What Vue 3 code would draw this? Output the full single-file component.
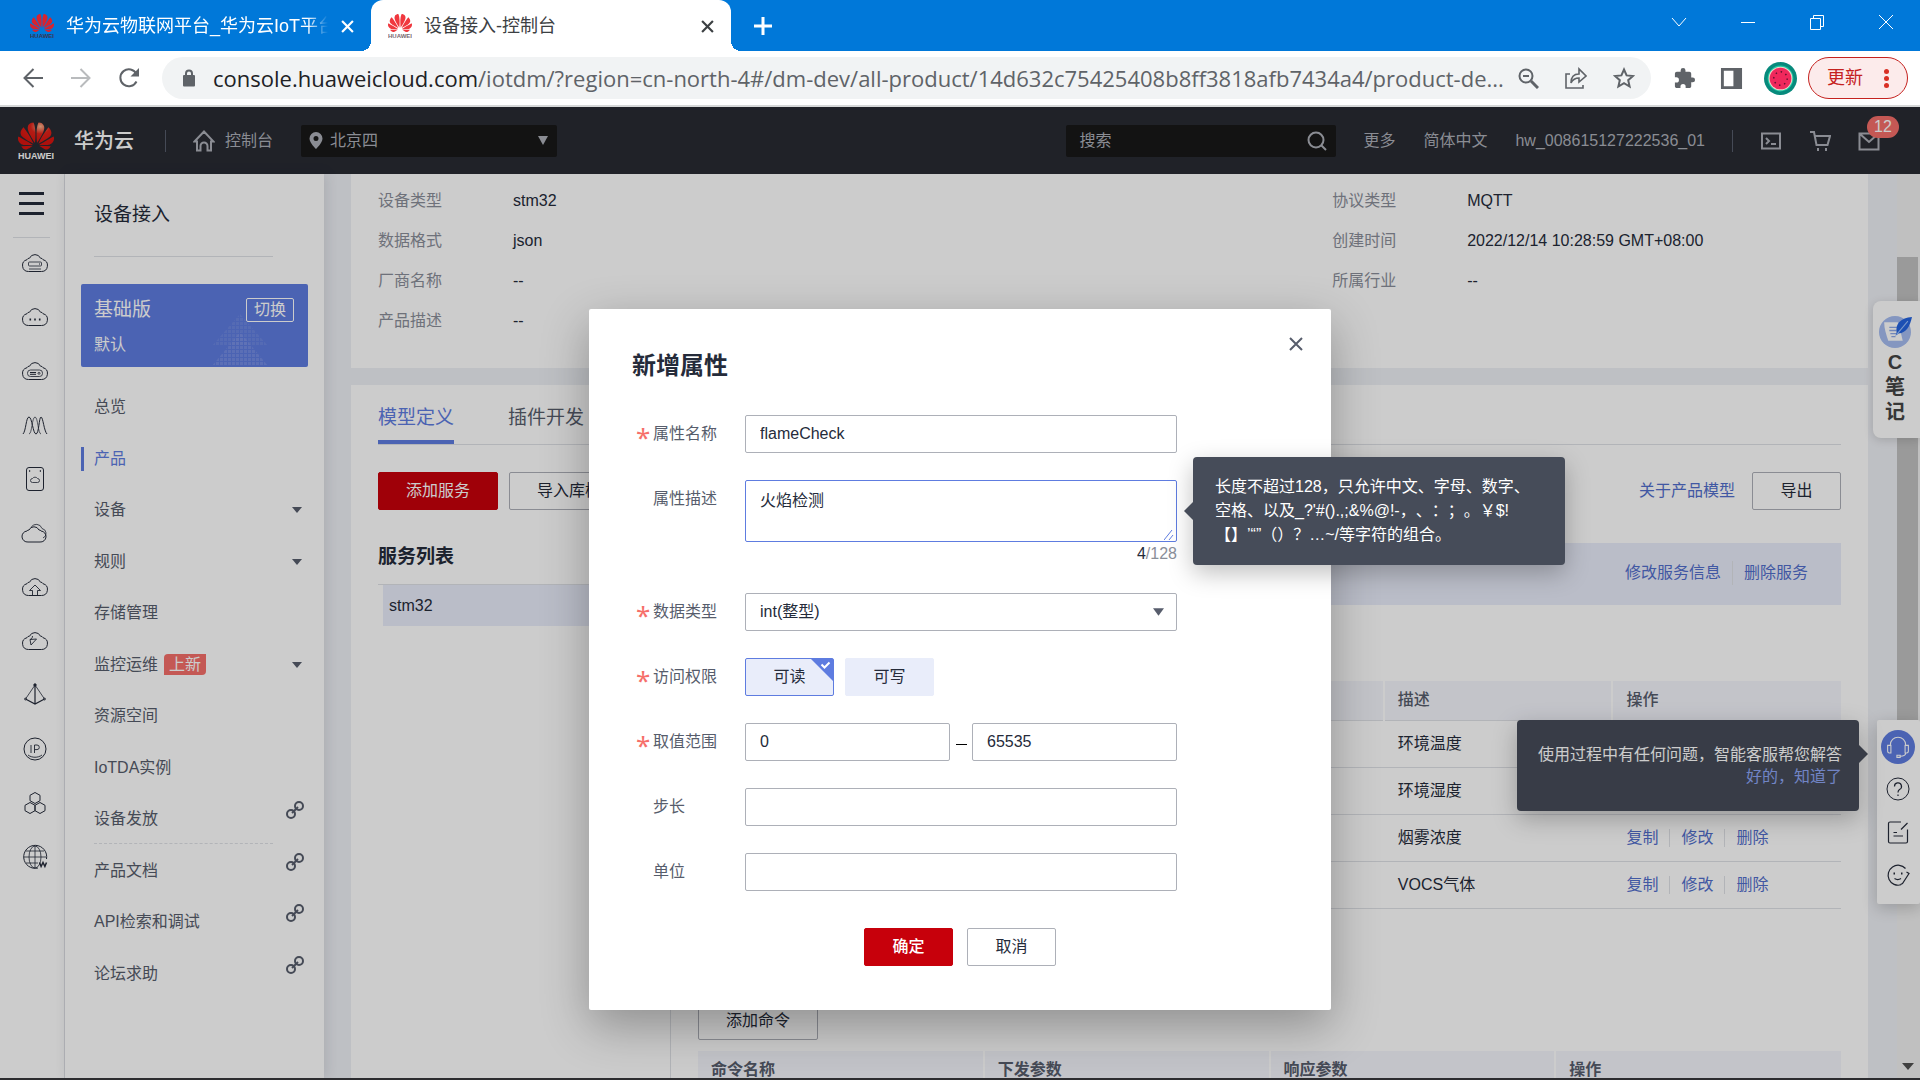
<script setup>
import { ref } from 'vue'

const petals = 'M3.67 6.14S1.82 7.91 1.72 9.78v.35c.08 1.51 1.22 2.4 1.22 2.4 1.83 1.79 6.26 4.04 7.3 4.55 0 0 .06.03.1-.01l.02-.04v-.04C7.52 10.8 3.67 6.14 3.67 6.14zM9.65 18.6c-.02-.08-.1-.08-.1-.08l-7.38.26c.8 1.43 2.15 2.53 3.56 2.2.96-.25 3.16-1.78 3.88-2.3.06-.05.04-.09.04-.09zm.08-.78C6.49 15.63.21 12.28.21 12.28c-.15.46-.2.9-.21 1.3v.07c0 1.07.4 1.82.4 1.82.8 1.69 2.34 2.2 2.34 2.2.7.3 1.4.31 1.4.31.12.02 4.4 0 5.54 0 .05 0 .08-.05.08-.05v-.06c0-.03-.03-.05-.03-.05zM9.06 3.19a3.42 3.42 0 00-2.57 3.15v.41c.03.6.16 1.05.16 1.05.66 2.9 3.86 7.65 4.55 8.65.05.05.1.03.1.03a.1.1 0 00.06-.1c1.06-10.6-1.11-13.42-1.11-13.42-.32.02-1.19.23-1.19.23zm8.299 2.27s-.49-1.8-2.44-2.28c0 0-.57-.14-1.17-.22 0 0-2.18 2.81-1.12 13.43.01.07.06.08.06.08.07.03.1-.03.1-.03.72-1.03 3.9-5.76 4.55-8.64 0 0 .36-1.4.02-2.34zm-2.92 13.07s-.07 0-.09.05c0 0-.01.07.03.1.7.51 2.85 2 3.88 2.3 0 0 .16.05.43.06h.14c.69-.02 1.9-.37 3-2.26l-7.4-.25zm7.83-8.41c.14-2.06-1.94-3.97-1.94-3.98 0 0-3.85 4.66-6.67 10.8 0 0-.03.08.02.13l.04.01h.06c1.06-.53 5.46-2.77 7.28-4.54 0 0 1.15-.93 1.21-2.42zm1.52 2.14s-6.28 3.37-9.52 5.55c0 0-.05.04-.03.11 0 0 .03.06.07.06 1.16 0 5.56 0 5.67-.02 0 0 .57-.02 1.27-.29 0 0 1.56-.5 2.37-2.27 0 0 .73-1.45.17-3.14z'

const cloud = '<path d="M7.500 22.500a6 6 0 0 1-1.500-11.800 2.500 2.500 0 0 1 2.500-1.500 6 6 0 0 1 11 0 2.500 2.500 0 0 1 2.500 1.500A6 6 0 0 1 20.500 22.500z"/>'

const services = [
  { name: '云服务器', art: cloud + '<rect x="7.500" y="13" width="13" height="4" rx="1" stroke-width=".8"/><path d="M8 20h12" stroke-width=".8"/><path d="M18 15h1"/>' },
  { name: '弹性云', art: cloud + '<path d="M8.500 16.500h1.600M13.200 16.500h1.600M17.900 16.500h1.600" stroke-width="2"/>' },
  { name: '裸金属', art: cloud + '<rect x="6.500" y="13" width="15" height="6.500" rx="3" stroke-width=".8"/><path d="M9 15.500h6M9 17.300h6" stroke-width="1"/><circle cx="18" cy="16.300" r="1" stroke-width=".8"/>' },
  { name: '伸缩', art: '<path d="M2 23c3-3 3-17 6-17s4 17 7 17 3-17 5-17 3 14 6 17"/><path d="M8 23c3 0 3-17 6-17s3 17 6 17" stroke-width=".7"/>' },
  { name: '云硬盘', art: '<rect x="5.500" y="2.500" width="17" height="23" rx="2.500"/><path d="M8 6h1.200M18.800 6H20" stroke-width="1.600"/><path d="M11.500 17.500a2 2 0 0 1 0-4 3 3 0 0 1 5 0 2 2 0 0 1 0 4z" stroke-width=".8"/>' },
  { name: '混合云', art: '<path d="M7 23a5.500 5.500 0 0 1-1-11 2 2 0 0 1 2-1 5.500 5.500 0 0 1 10 0 2 2 0 0 1 2 1 5.500 5.500 0 0 1-1 11z"/><path d="M10 8.500a6 6 0 0 1 11 1 5 5 0 0 1 1 9.500" stroke-width=".8"/>' },
  { name: '云备份', art: cloud + '<path d="M11.500 22v-4.500H8.500L14 12l5.500 5.500h-3V22" stroke-width=".9"/>' },
  { name: '云搜索', art: cloud + '<path d="M9 12.500l6.500-.5-5.500 6zM11.500 9c0 2-1 3-2.500 3.500" stroke-width=".9"/>' },
  { name: '网络', art: '<path d="M14 4L4.500 18M14 4l9.500 14" stroke-width=".8"/><path d="M4.500 18L14 23l9.500-5M14 4v19" stroke-width="1.200"/><circle cx="14" cy="4" r="1.200" fill="currentColor"/><circle cx="4.500" cy="18" r="1" stroke-width=".8"/><circle cx="23.500" cy="18" r="1" stroke-width=".8"/>' },
  { name: '弹性地址', art: '<circle cx="14" cy="14" r="11"/><path d="M10 10v8M13.500 18v-8h2.500a2.300 2.300 0 0 1 0 4.600h-2.500M7 20c4 3 10 3 14 0" stroke-width=".9"/>' },
  { name: '集群', art: '<path d="M14 3.500l5 2.800v5.400l-5 2.800-5-2.800V6.300zM9 13.500l5 2.800v5.400l-5 2.800-5-2.800v-5.400zM19 13.500l5 2.800v5.400l-5 2.800-5-2.800v-5.400z"/>' },
  { name: '域名', art: '<path d="M25.500 16A11.500 11.500 0 1 0 17 25"/><ellipse cx="14" cy="14" rx="6" ry="11" stroke-width=".8"/><path d="M14 3v22M3 14h22M5 8h18M5 20h12" stroke-width=".8"/><path d="M18.500 19.500l1.600 4 1.900-4 1.900 4 1.600-4" stroke-width="1.500"/>' }
]

const menu = [
  { text: '总览' },
  { text: '产品', active: true },
  { text: '设备', fold: true },
  { text: '规则', fold: true },
  { text: '存储管理' },
  { text: '监控运维', fold: true, tag: '上新' },
  { text: '资源空间' },
  { text: 'IoTDA实例' },
  { text: '设备发放', out: true },
  { text: '产品文档', out: true, split: true },
  { text: 'API检索和调试', out: true },
  { text: '论坛求助', out: true }
]

const info = [
  ['设备类型', 'stm32'], ['协议类型', 'MQTT'],
  ['数据格式', 'json'], ['创建时间', '2022/12/14 10:28:59 GMT+08:00'],
  ['厂商名称', '--'], ['所属行业', '--'],
  ['产品描述', '--']
]

const rowActions = ['复制', '修改', '删除']
const properties = [
  { text: '环境温度', actions: [] },
  { text: '环境湿度', actions: [] },
  { text: '烟雾浓度', actions: rowActions },
  { text: 'VOCS气体', actions: rowActions }
]

const form = ref({ name: 'flameCheck', desc: '火焰检测', read: true, write: false, min: '0', max: '65535', step: '', unit: '' })
</script>

<template>
  <div class="window">
    <header class="tabs">
      <div class="tab">
        <svg class="favicon" viewBox="0 0 24 24"><path :d="petals" fill="#d8232f" transform="translate(0 -3)" /><text x="12" y="24" text-anchor="middle" font-size="6" font-weight="700" fill="#3a3550">HUAWEI</text></svg>
        <span class="tab-title fade">华为云物联网平台_华为云IoT平台</span>
        <button class="tab-close" aria-label="关闭标签页"><svg viewBox="0 0 12 12"><path d="M1 1l10 10M11 1L1 11" /></svg></button>
      </div>
      <div class="tab current">
        <svg class="favicon" viewBox="0 0 24 24"><path :d="petals" fill="#f0383f" transform="translate(0 -3)" /><text x="12" y="24" text-anchor="middle" font-size="6" font-weight="700" fill="#77686f">HUAWEI</text></svg>
        <span class="tab-title">设备接入-控制台</span>
        <button class="tab-close" aria-label="关闭标签页"><svg viewBox="0 0 12 12"><path d="M1 1l10 10M11 1L1 11" /></svg></button>
      </div>
      <button class="new-tab" aria-label="新标签页"><svg viewBox="0 0 18 18"><path d="M9 0v18M0 9h18" /></svg></button>
      <div class="win-controls">
        <button aria-label="搜索标签页"><svg viewBox="0 0 16 16"><path d="M1 4l7 8 7-8" /></svg></button>
        <button aria-label="最小化"><svg viewBox="0 0 16 16"><path d="M1 8.500h14" /></svg></button>
        <button aria-label="还原"><svg viewBox="0 0 16 16"><path d="M1.500 4.500h10v11h-10zM4.500 4V1.500h10v11H12" /></svg></button>
        <button aria-label="关闭"><svg viewBox="0 0 16 16"><path d="M1 1l14 14M15 1L1 15" /></svg></button>
      </div>
    </header>

    <nav class="toolbar">
      <button class="nav-btn" aria-label="后退"><svg viewBox="0 0 20 20"><path d="M20 10H2M10.500 1L1.500 10l9 9" /></svg></button>
      <button class="nav-btn off" aria-label="前进"><svg viewBox="0 0 20 20"><path d="M0 10h18M9.500 1l9 9-9 9" /></svg></button>
      <button class="nav-btn" aria-label="刷新"><svg viewBox="0 0 20 20"><path d="M17.500 13.500a8.500 8.500 0 1 1 0-7.500" /><path d="M20 0v8.500h-8.500z" fill="currentColor" stroke="none" /></svg></button>
      <div class="address">
        <svg class="lock" viewBox="0 0 14 18"><rect x="1" y="6" width="12" height="11.500" rx="1" /><path d="M4 7V4.500a3 3 0 0 1 6 0V7" fill="none" stroke="#5f6368" stroke-width="2" /></svg>
        <span class="url"><b>console.huaweicloud.com</b>/iotdm/?region=cn-north-4#/dm-dev/all-product/14d632c75425408b8ff3818afb7434a4/product-de...</span>
        <button aria-label="缩放"><svg viewBox="0 0 22 22"><circle cx="9" cy="9" r="6.500" /><path d="M14 14l7 7" stroke-width="3" /><path d="M6 9h6" /></svg></button>
        <button aria-label="分享"><svg viewBox="0 0 22 22"><path d="M5 7H1v14h17v-3" stroke-width="1.600" /><path d="M6 16c0-6 3-9 8-9V2l7 7-7 6v-4c-4 0-6 1-8 5z" stroke-width="1.600" /></svg></button>
        <button aria-label="收藏"><svg viewBox="0 0 22 22"><path d="M11 2.500l2.600 5.900 6.400.6-4.800 4.200 1.400 6.300L11 16.200l-5.600 3.300 1.400-6.300L2 9l6.400-.6z" /></svg></button>
      </div>
      <button class="ext" aria-label="扩展程序"><svg viewBox="0 0 24 24"><path d="M20.500 11H19V7c0-1.100-.9-2-2-2h-4V3.500a2.500 2.500 0 0 0-5 0V5H4c-1.100 0-2 .9-2 2v3.800h1.500a2.700 2.700 0 0 1 0 5.400H2V20c0 1.100.9 2 2 2h3.800v-1.500a2.700 2.700 0 0 1 5.400 0V22H17c1.100 0 2-.9 2-2v-4h1.500a2.500 2.500 0 0 0 0-5z" /></svg></button>
      <button class="ext" aria-label="侧边栏"><svg viewBox="0 0 24 24"><path fill-rule="evenodd" d="M1 1h22v22H1zM4 4v16h10V4z" /></svg></button>
      <svg class="avatar" viewBox="0 0 32 32"><circle cx="16" cy="16" r="16" fill="#078a7c" /><circle cx="16" cy="16" r="12.500" fill="#1ec9a4" /><circle cx="16" cy="16" r="11.500" fill="#f5d3c8" /><circle cx="16" cy="16" r="10.500" fill="#f0285c" /><circle cx="16" cy="16" r="6.500" fill="none" stroke="#5c1230" stroke-width="1.400" stroke-dasharray="1.400 3.700" /></svg>
      <button class="update">更新<i></i></button>
    </nav>

    <div class="site">
      <header class="topbar">
        <svg class="logo" viewBox="0 0 36 38"><defs><radialGradient id="petalFill" cx="62%" cy="15%" r="60%"><stop offset="0" stop-color="#f9b58c" /><stop offset=".45" stop-color="#e2231a" /><stop offset="1" stop-color="#d9150f" /></radialGradient></defs><path :d="petals" fill="url(#petalFill)" transform="translate(0 -4) scale(1.500)" /><text x="18" y="37" text-anchor="middle" font-size="9" font-weight="700" fill="#fff">HUAWEI</text></svg>
        <strong class="brand">华为云</strong>
        <span class="bar"></span>
        <a class="home" href="#"><svg viewBox="0 0 22 22"><path d="M1.500 11.500L11 1.500l9.500 10H18V20.500h-3.500V16a3.500 3.500 0 0 0-7 0v4.500H4v-9z" /></svg>控制台</a>
        <button class="region"><svg viewBox="0 0 14 17"><path fill-rule="evenodd" d="M7 0a6.500 6.500 0 0 1 6.500 6.500C13.500 11 7 17 7 17S.5 11 .5 6.500A6.500 6.500 0 0 1 7 0zm0 4a2.500 2.500 0 1 0 0 5 2.500 2.500 0 0 0 0-5z" /></svg>北京四<svg class="tri" viewBox="0 0 10 9"><path d="M0 0h10L5 9z" /></svg></button>
        <label class="search"><input type="text" placeholder="搜索" aria-label="搜索" /><svg viewBox="0 0 22 22"><circle cx="10" cy="10" r="7.500" /><path d="M15.500 15.500L20 20" /></svg></label>
        <a href="#" class="top-link">更多</a>
        <a href="#" class="top-link">简体中文</a>
        <a href="#" class="top-link">hw_008615127222536_01</a>
        <span class="bar end"></span>
        <button class="tool" aria-label="命令行"><svg viewBox="0 0 22 22"><path d="M2 3.500h18v15H2zM6 8l3 3-3 3M11 14h5" /></svg></button>
        <button class="tool" aria-label="购物车"><svg viewBox="0 0 22 22"><path d="M1 2h4l2.500 13h11L21 6H6" /><path d="M8 19.500h2M16 19.500h2" stroke-width="3" /></svg></button>
        <button class="tool mail" aria-label="消息"><svg viewBox="0 0 22 22"><path d="M1.500 3.500h19v16h-19zM2 4l9 8 9-8" /></svg><em>12</em></button>
      </header>

      <div class="page">
        <aside class="rail">
          <button class="burger" aria-label="服务列表"><i></i><i></i><i></i></button>
          <ul>
            <li v-for="s in services" :key="s.name"><a href="#" :aria-label="s.name"><svg viewBox="0 0 28 28" v-html="s.art"></svg></a></li>
          </ul>
        </aside>

        <aside class="side">
          <h2>设备接入</h2>
          <div class="edition">
            <svg class="edition-art" viewBox="0 0 56 52">
              <defs><pattern id="dots" width="4" height="4" patternUnits="userSpaceOnUse"><rect width="3" height="3" fill="#7f95e6" /></pattern></defs>
              <path d="M28 0l28 32H0z" fill="url(#dots)" opacity=".4" /><path d="M28 18l28 34H0z" fill="url(#dots)" opacity=".6" />
            </svg>
            <div class="edition-head"><strong>基础版</strong><button>切换</button></div>
            <span>默认</span>
          </div>
          <ul>
            <li v-for="m in menu" :key="m.text" :class="{ active: m.active, split: m.split }">
              <a href="#">{{ m.text }}<span v-if="m.tag" class="tag">{{ m.tag }}</span></a>
              <svg v-if="m.fold" class="tri" viewBox="0 0 10 6"><path d="M0 0h10L5 6z" /></svg>
              <svg v-if="m.out" class="chain" viewBox="0 0 18 18"><circle cx="5" cy="13" r="4" /><circle cx="13" cy="5" r="4" /><path d="M6 12l6-6" /></svg>
            </li>
          </ul>
        </aside>

        <main>
          <section class="card info">
            <dl v-for="[k, v] in info" :key="k"><dt>{{ k }}</dt><dd>{{ v }}</dd></dl>
          </section>

          <section class="card model">
            <div class="model-tabs"><a href="#" class="on">模型定义</a><a href="#">插件开发</a></div>
            <div class="actions">
              <button class="btn primary">添加服务</button>
              <button class="btn">导入库模型</button>
              <a href="#" class="about">关于产品模型</a>
              <button class="btn small">导出</button>
            </div>
            <div class="split-view">
              <div class="service-list">
                <h3>服务列表</h3>
                <a href="#">stm32</a>
              </div>
              <div class="detail">
                <div class="band"><a href="#">修改服务信息</a><a href="#">删除服务</a></div>
                <table class="props">
                  <thead><tr><th></th><th>描述</th><th>操作</th></tr></thead>
                  <tbody>
                    <tr v-for="p in properties" :key="p.text">
                      <td></td><td>{{ p.text }}</td>
                      <td><span class="ops"><a v-for="a in p.actions" :key="a" href="#">{{ a }}</a></span></td>
                    </tr>
                  </tbody>
                </table>
                <button class="btn">添加命令</button>
                <table class="cmds">
                  <thead><tr><th>命令名称</th><th>下发参数</th><th>响应参数</th><th>操作</th></tr></thead>
                </table>
              </div>
            </div>
          </section>
        </main>

        <div class="scroll"><div class="thumb"></div><svg viewBox="0 0 12 7"><path d="M0 0h12L6 7z" /></svg></div>

        <a class="notes" href="#">
          <svg viewBox="0 0 32 32"><circle cx="15.500" cy="16.500" r="15.500" fill="#a5bcf0" /><path d="M5 7h13l1 1 4 17H9c-2-6-4-12-4-18z" fill="#fff" /><path d="M10 12h8M10 15h7M11 18h6M12 21h4" stroke="#8fa9e8" stroke-width="1.300" /><path d="M32 2C21 3 16 8 17 17l-1 3 3-2C27 17 30 11 32 2z" fill="#2463e0" /><path d="M17 19L28 6" stroke="#9cc3ff" /></svg>
          <span>C</span><span>笔</span><span>记</span>
        </a>

        <div class="helper">
          <button class="service" aria-label="智能客服"><svg viewBox="0 0 22 22"><path d="M4 10V9a7 7 0 0 1 14 0v1M1.500 9.500h3v7h-1.500c-1.500 0-1.500-1-1.500-2zM20.500 9.500h-3v7h1.500c1.500 0 1.500-1 1.500-2zM18 16.500c0 2-2 3-5 3M10 18.500h3v2h-3z" /></svg></button>
          <button aria-label="帮助"><svg viewBox="0 0 24 24"><circle cx="12" cy="12" r="11" /><path d="M8.500 9.500a3.500 3.500 0 1 1 5 3c-1 .7-1.500 1.500-1.500 3M12 17.500V19" stroke-width="1.200" /></svg></button>
          <button aria-label="反馈"><svg viewBox="0 0 24 24" stroke-width="1.200"><path d="M15 2H4a1.500 1.500 0 0 0-1.500 1.500v18A1.500 1.500 0 0 0 4 23h16a1.500 1.500 0 0 0 1.500-1.500V9.500M21.500 3L15 9.500M7.500 12.500h3.500M7.500 16H17" /></svg></button>
          <button aria-label="评价"><svg viewBox="0 0 24 24" stroke-width="1.200"><path d="M19.500 5.500a10 10 0 1 0-4.500 16.300" /><path d="M7.500 10.500h1.500M15 10.500h1.500" stroke-width="1.800" /><path d="M8.500 15.500c2 1.300 4.500 1.300 6.500 0M20.500 9l2.500 1.500-6.500 10-2 1" /></svg></button>
          <div class="tip help-tip"><p>使用过程中有任何问题，智能客服帮您解答</p><a href="#">好的，知道了</a></div>
        </div>
      </div>

      <div class="mask">
        <form class="dialog" role="dialog" aria-label="新增属性" @submit.prevent>
          <button type="button" class="dialog-close" aria-label="关闭"><svg viewBox="0 0 14 14"><path d="M1 1l12 12M13 1L1 13" /></svg></button>
          <h1>新增属性</h1>
          <div class="field req"><label for="name">属性名称</label><input id="name" v-model="form.name" type="text" /></div>
          <div class="field desc">
            <label for="desc">属性描述</label>
            <div class="area">
              <textarea id="desc" v-model="form.desc"></textarea>
              <svg class="grip" viewBox="0 0 10 10"><path d="M0 10L8 0M5 10l4-5" /></svg>
              <div class="count"><b>{{ form.desc.length }}</b>/128</div>
              <div class="tip rule-tip">长度不超过128，只允许中文、字母、数字、<br />空格、以及_?'#().,;&amp;%@!-，、：；。￥$!<br />【】’“”（）？…~/等字符的组合。</div>
            </div>
          </div>
          <div class="field req">
            <label for="type">数据类型</label>
            <div class="select"><select id="type"><option>int(整型)</option></select><svg class="tri" viewBox="0 0 10 7"><path d="M0 0h10L5 7z" /></svg></div>
          </div>
          <div class="field req">
            <span class="label">访问权限</span>
            <div class="checks">
              <label :class="{ on: form.read }"><input v-model="form.read" type="checkbox" />可读<svg v-if="form.read" viewBox="0 0 22 22"><path d="M0 0h22v22z" fill="#5e7ce0" /><path d="M10.500 5.500l3 3 5-5" fill="none" stroke="#fff" stroke-width="2" /></svg></label>
              <label :class="{ on: form.write }"><input v-model="form.write" type="checkbox" />可写</label>
            </div>
          </div>
          <div class="field req">
            <label for="min">取值范围</label>
            <input id="min" v-model="form.min" type="text" /><span class="dash"></span><input v-model="form.max" type="text" aria-label="最大值" />
          </div>
          <div class="field"><label for="step">步长</label><input id="step" v-model="form.step" type="text" /></div>
          <div class="field"><label for="unit">单位</label><input id="unit" v-model="form.unit" type="text" /></div>
          <div class="dialog-foot"><button class="btn small ok" type="submit">确定</button><button class="btn small" type="button">取消</button></div>
        </form>
      </div>
    </div>
    <div class="edge"></div>
  </div>
</template>

<style>
body {
  margin: 0;
  overflow: hidden;
}
</style>

<style scoped>
* {
  box-sizing: border-box;
}
.window {
  display: flex;
  flex-direction: column;
  height: 100vh;
  font: 16px/24px "Liberation Sans", "Noto Sans CJK SC", sans-serif;
  color: #252b3a;
  text-spacing-trim: space-all;
}
button, input, textarea, select {
  font: inherit;
  color: inherit;
  margin: 0;
}
button {
  padding: 0;
  border: 0;
  background: none;
  flex: none;
}
a {
  color: #526ecc;
  text-decoration: none;
}
ul, h1, h2, h3, p, dl, dd {
  margin: 0;
  padding: 0;
  list-style: none;
}
svg {
  display: block;
  flex: none;
  fill: none;
  stroke: currentColor;
}
svg text {
  stroke: none;
  font-family: "Liberation Sans", sans-serif;
}
.tri {
  fill: currentColor;
  stroke: none;
}

/* browser tabs */
.tabs {
  display: flex;
  flex: none;
  height: 51px;
  background: #0078d9;
  color: #fff;
}
.tab {
  display: flex;
  align-items: center;
  width: 371px;
  padding: 1px 17px 0 30px;
  font-size: 18px;
}
.tab.current {
  position: relative;
  width: 360px;
  padding-left: 17px;
  background: #fff;
  color: #3c4043;
  border-radius: 12px 12px 0 0;
}
.tab.current::before,
.tab.current::after {
  content: "";
  position: absolute;
  bottom: 0;
  width: 10px;
  height: 10px;
  left: -10px;
  background: radial-gradient(circle at 0 0, transparent 10px, #fff 10px);
}
.tab.current::after {
  left: 100%;
  background: radial-gradient(circle at 100% 0, transparent 10px, #fff 10px);
}
.favicon {
  width: 24px;
  height: 24px;
  margin-right: 12px;
  stroke: none;
}
.tab-title {
  flex: 1;
  overflow: hidden;
  white-space: nowrap;
}
.fade {
  mask-image: linear-gradient(90deg, #000 92%, transparent);
}
.tab-close {
  margin-left: 13px;
}
.tab-close svg {
  width: 13px;
  height: 13px;
  stroke-width: 2;
}
.new-tab {
  margin-left: 23px;
  color: #fff;
}
.new-tab svg {
  width: 18px;
  height: 18px;
  stroke-width: 3;
}
.win-controls {
  display: flex;
  height: 43px;
  margin-left: auto;
}
.win-controls button {
  display: grid;
  place-items: center;
  width: 69px;
  color: #fff;
}
.win-controls svg {
  width: 16px;
  height: 16px;
  stroke-width: 1;
}

/* address bar */
.toolbar {
  display: flex;
  flex: none;
  align-items: center;
  height: 56px;
  padding: 0 12px 0 23px;
  background: #fff;
  border-bottom: 2px solid #d6d8d8;
  color: #5f6368;
}
.nav-btn {
  margin-right: 28px;
}
.nav-btn svg {
  width: 20px;
  height: 20px;
  stroke-width: 2;
}
.nav-btn + .nav-btn + .nav-btn {
  margin-right: 23px;
}
.off {
  color: #b9bbbd;
}
.address {
  display: flex;
  flex: 1;
  align-items: center;
  min-width: 0;
  height: 42px;
  padding: 0 16px 0 20px;
  border-radius: 21px;
  background: #f1f3f4;
}
.lock {
  width: 14px;
  height: 18px;
  fill: #5f6368;
  stroke: none;
}
.url {
  flex: 1;
  margin-left: 17px;
  overflow: hidden;
  white-space: nowrap;
  font: 22px/30px "Open Sans", sans-serif;
}
.url b {
  font-weight: 400;
  color: #202124;
}
.address button {
  margin-left: 26px;
}
.url + button {
  margin-left: 12px;
}
.address button svg {
  width: 22px;
  height: 22px;
  stroke-width: 2;
}
.ext {
  margin-left: 24px;
}
.address + .ext {
  margin-left: 22px;
}
.ext svg {
  width: 23px;
  height: 23px;
  fill: currentColor;
  stroke: none;
}
.avatar {
  width: 33px;
  height: 33px;
  margin: 0 11px 0 21px;
  stroke: none;
}
.update {
  display: flex;
  align-items: center;
  justify-content: space-between;
  width: 100px;
  height: 42px;
  padding: 0 18px;
  border: 1px solid #c5221f;
  border-radius: 21px;
  background: #fcebeb;
  color: #c5221f;
  font-size: 18px;
}
.update i {
  width: 5px;
  height: 5px;
  border-radius: 50%;
  background: #d93025;
  box-shadow: 0 -7px #d93025, 0 7px #d93025;
}

/* console header */
.site {
  position: relative;
  display: flex;
  flex: 1;
  flex-direction: column;
  min-height: 0;
  overflow: hidden;
}
.topbar {
  display: flex;
  flex: none;
  align-items: center;
  height: 67px;
  padding: 0 40px 0 18px;
  background: #282b33;
  color: #adb0b8;
}
.logo {
  width: 36px;
  height: 38px;
  stroke: none;
}
.brand {
  margin-left: 20px;
  font-size: 20px;
  font-weight: 500;
  color: #fff;
}
.bar {
  width: 1px;
  height: 22px;
  margin: 0 27px 0 31px;
  background: #575d6c;
}
.home {
  display: flex;
  align-items: center;
  gap: 10px;
  color: inherit;
}
.home svg {
  width: 22px;
  height: 22px;
  stroke-width: 2;
}
.region {
  display: flex;
  align-items: center;
  gap: 7px;
  width: 256px;
  height: 32px;
  margin-left: 28px;
  padding: 0 9px 0 8px;
  border-radius: 2px;
  background: #181818;
}
.region svg {
  width: 14px;
  height: 17px;
  fill: currentColor;
  stroke: none;
}
.region .tri {
  width: 10px;
  height: 9px;
  margin-left: auto;
}
.search {
  display: flex;
  align-items: center;
  width: 270px;
  height: 32px;
  margin-left: auto;
  padding: 0 8px 0 13px;
  border-radius: 2px;
  background: #181818;
}
.search input {
  flex: 1;
  min-width: 0;
  padding: 0;
  border: 0;
  outline: 0;
  background: none;
}
.search input::placeholder {
  color: #adb0b8;
}
.search svg {
  width: 22px;
  height: 22px;
  stroke-width: 2;
}
.top-link {
  margin-left: 28px;
  color: inherit;
}
.search + .top-link {
  margin-left: 27px;
}
.bar.end {
  margin: 0 0 0 27px;
}
.tool {
  position: relative;
  margin-left: 27px;
}
.tool svg {
  width: 22px;
  height: 22px;
  stroke-width: 2;
}
.tool em {
  position: absolute;
  left: 9px;
  top: -14px;
  width: 32px;
  height: 22px;
  border-radius: 11px;
  background: #f66f6a;
  color: #fff;
  font-style: normal;
  line-height: 22px;
}

/* page frame */
.page {
  position: relative;
  display: flex;
  flex: 1;
  align-items: stretch;
  min-height: 0;
  background: #eef0f5;
}
.rail {
  flex: none;
  width: 65px;
  background: #fff;
  border-right: 1px solid #dfe1e6;
}
.burger {
  display: flex;
  flex-direction: column;
  justify-content: space-between;
  width: 25px;
  height: 23px;
  margin: 18px 0 0 19px;
}
.burger i {
  height: 3px;
  background: #252b3a;
}
.rail ul {
  margin-top: 22px;
}
.rail ul::before {
  content: "";
  display: block;
  width: 37px;
  margin: 0 0 -2px 13px;
  border-top: 1px solid #dfe1e6;
}
.rail li a {
  display: grid;
  place-items: center;
  height: 54px;
  padding-left: 6px;
  color: #252b3a;
}
.rail svg {
  width: 28px;
  height: 28px;
}
.side {
  flex: none;
  width: 259px;
  padding: 0 16px;
  background: #fff;
  box-shadow: 2px 0 12px rgba(37, 43, 58, 0.12);
}
.side h2 {
  width: 179px;
  margin-left: 13px;
  padding: 27px 0 28px;
  border-bottom: 1px solid #dfe1e6;
  font-size: 19px;
  font-weight: 400;
  line-height: 27px;
}
.edition {
  position: relative;
  height: 83px;
  margin: 27px 0 14px;
  padding: 14px 14px 0 13px;
  border-radius: 2px;
  background: #5e7ce0;
  color: #fff;
}
.edition-art {
  position: absolute;
  right: 40px;
  bottom: 1px;
  width: 56px;
  height: 52px;
  stroke: none;
}
.edition-head {
  position: relative;
  display: flex;
  justify-content: space-between;
  margin-bottom: 11px;
}
.edition strong {
  font-size: 19px;
  font-weight: 400;
}
.edition button {
  width: 48px;
  height: 24px;
  border: 1px solid #fff;
  border-radius: 2px;
  line-height: 22px;
}
.side li {
  position: relative;
  display: flex;
  align-items: center;
  height: 52px;
  padding: 0 4px 0 13px;
}
.side li:nth-child(even) {
  height: 51px;
}
.side li a {
  flex: 1;
  color: #575d6c;
}
.side .active a {
  color: #5e7ce0;
}
.side .active::before {
  content: "";
  position: absolute;
  left: 0;
  width: 3px;
  height: 24px;
  background: #5e7ce0;
}
.side .split::before {
  content: "";
  position: absolute;
  top: -2px;
  left: 13px;
  width: 179px;
  border-top: 1px dashed #dfe1e6;
}
.side .tri {
  width: 10px;
  height: 6px;
  margin-right: 2px;
  color: #575d6c;
}
.chain {
  width: 18px;
  height: 18px;
  margin-bottom: 18px;
  stroke-width: 2;
  color: #575d6c;
}
.tag {
  display: inline-block;
  margin-left: 6px;
  padding: 0 5px;
  border-radius: 4px 0 4px 0;
  background: #f66f6a;
  color: #fff;
  line-height: 21px;
}

/* main content */
main {
  flex: 1;
  min-width: 0;
  margin: 0 29px 0 27px;
  overflow: hidden;
}
.card {
  background: #fff;
}
.info {
  display: grid;
  grid-template-columns: 15fr 8fr;
  padding: 7px 27px 27px;
}
.info dl {
  display: flex;
  height: 40px;
  line-height: 40px;
}
.info dt {
  width: 135px;
  color: #8a8e99;
}
.model {
  margin-top: 17px;
  padding: 0 27px 60px;
}
.model-tabs {
  display: flex;
  gap: 54px;
  height: 60px;
  border-bottom: 1px solid #dfe1e6;
  font-size: 19px;
}
.model-tabs a {
  color: #575d6c;
  line-height: 65px;
}
.model-tabs .on {
  height: 59px;
  color: #5e7ce0;
  border-bottom: 4px solid #5e7ce0;
}
.actions {
  display: flex;
  align-items: center;
  gap: 11px;
  margin-top: 27px;
}
.btn {
  height: 38px;
  padding: 0 27px;
  border: 1px solid #adb0b8;
  border-radius: 2px;
  background: #fff;
}
.small {
  width: 89px;
}
.primary {
  border-color: #c7000b;
  background: #c7000b;
  color: #fff;
}
.about {
  margin: 0 6px 0 auto;
}
.split-view {
  display: flex;
  margin-top: 33px;
}
.service-list {
  width: 293px;
  border-right: 1px solid #dfe1e6;
}
.service-list h3 {
  padding-bottom: 14px;
  border-bottom: 1px solid #dfe1e6;
  font-size: 19px;
  line-height: 27px;
}
.service-list a {
  display: block;
  height: 41px;
  margin-left: 5px;
  padding-left: 6px;
  background: #e9edfa;
  color: #252b3a;
  line-height: 41px;
}
.detail {
  flex: 1;
  min-width: 0;
  margin-left: 27px;
}
.band {
  display: flex;
  align-items: center;
  justify-content: flex-end;
  height: 62px;
  margin-bottom: 76px;
  padding: 0 33px 2px;
  background: #e9edfa;
}
.band a + a,
.ops a + a {
  margin-left: 11px;
  padding-left: 11px;
  border-left: 1px solid #dfe1e6;
}
table {
  width: 100%;
  border-collapse: collapse;
  table-layout: fixed;
}
th {
  height: 39px;
  padding: 0 0 0 13px;
  background: #f4f5fc;
  border-left: 2px solid #fff;
  color: #575d6c;
  text-align: left;
}
th:first-child {
  border-left: 0;
}
tr {
  border-bottom: 1px solid #dfe1e6;
}
td {
  height: 47px;
  padding: 0 0 0 14px;
}
.props th:first-child {
  width: 60%;
}
.props th {
  font-weight: 500;
}
.ops {
  display: flex;
  line-height: 18px;
}
.detail .btn {
  display: block;
  margin: 93px 0 11px;
}

/* floating pieces on the right edge */
.scroll {
  display: flex;
  flex: none;
  flex-direction: column;
  align-items: center;
  width: 23px;
  padding: 83px 2px 8px 0;
  background: #f1f1f1;
}
.thumb {
  flex: none;
  width: 100%;
  height: 57%;
  background: #c1c1c1;
}
.scroll svg {
  width: 12px;
  height: 7px;
  margin-top: auto;
  fill: #505050;
  stroke: none;
}
.notes {
  position: absolute;
  top: 127px;
  right: 0;
  width: 47px;
  height: 137px;
  padding: 14px 3px 0 0;
  border-radius: 8px 0 0 8px;
  background: #fff;
  box-shadow: 0 2px 10px rgba(0, 0, 0, 0.15);
  color: #444;
  font-size: 20px;
  font-weight: 700;
  line-height: 25px;
  text-align: center;
}
.notes svg {
  width: 33px;
  height: 33px;
  margin: 0 auto 2px 6px;
  stroke: none;
}
.notes span {
  display: block;
}
.helper {
  position: absolute;
  top: 546px;
  right: 0;
  display: flex;
  flex-direction: column;
  align-items: center;
  gap: 19px;
  width: 43px;
  height: 184px;
  padding: 10px 1px 0 0;
  border-radius: 2px;
  background: #fff;
  box-shadow: 0 4px 16px rgba(0, 0, 0, 0.2);
}
.helper button svg {
  width: 24px;
  height: 24px;
}
.helper .service {
  display: grid;
  place-items: center;
  width: 34px;
  height: 34px;
  margin-bottom: -6px;
  border-radius: 50%;
  background: #5e7ce0;
  color: #fff;
}
.tip {
  position: absolute;
  border-radius: 4px;
  background: #464c59;
  color: #fff;
  box-shadow: 0 8px 24px rgba(0, 0, 0, 0.25);
  white-space: nowrap;
}
.tip::before {
  content: "";
  position: absolute;
  border: 9px solid transparent;
}
.help-tip {
  top: 0;
  right: 61px;
  min-width: 342px;
  height: 91px;
  padding: 24px 17px 0;
  text-align: right;
  line-height: 22px;
}
.help-tip::before {
  top: 25px;
  left: 100%;
  border-left-color: #464c59;
}
.help-tip a {
  color: #8ea6f5;
}

/* dialog */
.mask {
  position: absolute;
  inset: 0;
  padding-top: 202px;
  background: rgba(0, 0, 0, 0.2);
}
.dialog {
  position: relative;
  width: 742px;
  margin: 0 auto;
  padding: 41px 154px 44px 43px;
  border-radius: 2px;
  background: #fff;
  box-shadow: 0 16px 48px rgba(0, 0, 0, 0.3);
}
.dialog-close {
  position: absolute;
  top: 28px;
  right: 28px;
  color: #575d6c;
}
.dialog-close svg {
  width: 14px;
  height: 14px;
  stroke-width: 2;
}
.dialog h1 {
  margin-bottom: 33px;
  font-size: 24px;
  line-height: 32px;
}
.field {
  position: relative;
  display: flex;
  min-height: 38px;
  margin-bottom: 27px;
}
.field > label,
.label {
  flex: none;
  width: 113px;
  padding-left: 21px;
  color: #575d6c;
  line-height: 38px;
}
.req::before {
  content: "*";
  position: absolute;
  left: 4px;
  top: 3px;
  color: #f66f6a;
  font: 26px/38px "Noto Sans", sans-serif;
}
.field > input,
.select {
  flex: 1;
  width: 0;
  height: 38px;
}
.field > input,
select,
textarea {
  padding: 0 14px;
  border: 1px solid #adb0b8;
  border-radius: 2px;
  background: #fff;
  outline: 0;
}
.desc {
  margin-bottom: 26px;
}
.area,
.select {
  position: relative;
  flex: 1;
}
textarea {
  display: block;
  width: 100%;
  height: 62px;
  padding-top: 8px;
  border-color: #5e7ce0;
  resize: none;
}
.grip {
  position: absolute;
  top: 50px;
  right: 3px;
  width: 10px;
  height: 10px;
  color: #5e7ce0;
}
.count {
  height: 25px;
  text-align: right;
  color: #8a8e99;
}
.count b {
  font-weight: 400;
  color: #252b3a;
}
select {
  appearance: none;
  width: 100%;
  height: 38px;
}
.select .tri {
  position: absolute;
  top: 15px;
  right: 13px;
  width: 11px;
  height: 8px;
  color: #575d6c;
}
.checks {
  display: flex;
  gap: 11px;
}
.checks label {
  position: relative;
  width: 89px;
  height: 38px;
  border: 1px solid #e9edfa;
  border-radius: 2px;
  background: #e9edfa;
  line-height: 36px;
  text-align: center;
}
.checks .on {
  border-color: #5e7ce0;
}
.checks input {
  position: absolute;
  opacity: 0;
}
.checks svg {
  position: absolute;
  top: 0;
  right: 0;
  width: 22px;
  height: 22px;
  stroke: none;
}
.dash {
  align-self: center;
  width: 11px;
  height: 1px;
  margin: 4px 5px 0 6px;
  background: #000;
}
.dialog-foot {
  display: flex;
  justify-content: center;
  gap: 14px;
  margin: 37px 0 0 111px;
}
.ok {
  border-color: #c7000b;
  background: #c7000b;
  color: #fff;
  font-weight: 500;
}
.rule-tip {
  top: -23px;
  left: 100%;
  width: 372px;
  height: 108px;
  margin-left: 16px;
  padding: 18px 22px;
}
.rule-tip::before {
  top: 45px;
  right: 100%;
  border-right-color: #464c59;
}
.edge {
  flex: none;
  height: 2px;
  background: #2c2c2f;
}
</style>
